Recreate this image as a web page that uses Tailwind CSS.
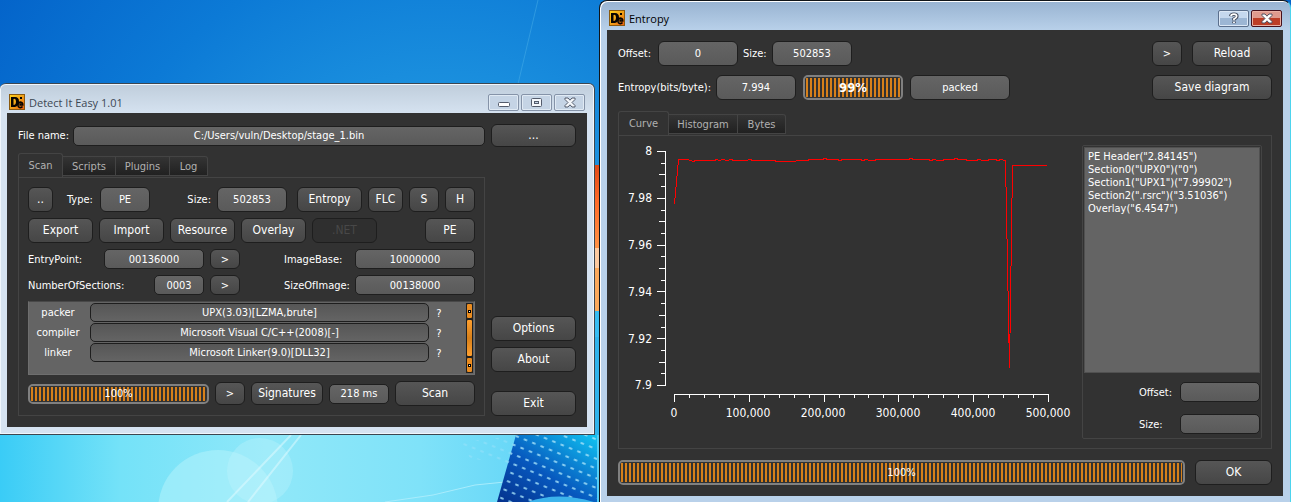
<!DOCTYPE html>
<html lang="en">
<head>
<meta charset="utf-8">
<title>Detect It Easy</title>
<script src="https://cdn.jsdelivr.net/npm/@tailwindcss/browser@4"></script>
</head>
<body class="relative h-screen overflow-hidden bg-[#1a8fe0] font-['DejaVu_Sans_Condensed','Noto_Sans',sans-serif] text-[11px] leading-[13px] text-white">

<!-- Wallpaper -->
<svg class="absolute inset-0 h-full w-full" viewBox="0 0 1291 502" preserveAspectRatio="xMinYMin slice" aria-hidden="true">
  <defs>
    <radialGradient id="sky" gradientUnits="userSpaceOnUse" cx="440" cy="300" r="580">
      <stop offset="0" stop-color="#22a4ea"/><stop offset=".36" stop-color="#1b90de"/><stop offset=".62" stop-color="#0c7ad6"/><stop offset=".92" stop-color="#0464ca"/>
    </radialGradient>
    <linearGradient id="sea" x1="0" x2="1" y1="0" y2="0">
      <stop offset="0" stop-color="#3accf6"/><stop offset=".2" stop-color="#74e2f8"/><stop offset=".45" stop-color="#90e8f9"/><stop offset=".7" stop-color="#7fe2f9"/><stop offset="1" stop-color="#54cef6"/>
    </linearGradient>
    <linearGradient id="flag" x1="0" x2="0" y1="0" y2="1">
      <stop offset="0" stop-color="#e04a18"/><stop offset=".35" stop-color="#ff6a28"/><stop offset="1" stop-color="#ffa050"/>
    </linearGradient>
    <linearGradient id="deep" x1="0" x2="1" y1="1" y2="0">
      <stop offset="0" stop-color="#04318c"/><stop offset=".45" stop-color="#0758be"/><stop offset="1" stop-color="#10c4f2"/>
    </linearGradient>
    <pattern id="dots" width="9" height="9" patternUnits="userSpaceOnUse" patternTransform="rotate(22)">
      <rect x="2" y="3" width="4" height="2" rx="1" fill="#a8e4fa" opacity=".8"/>
    </pattern>
    <clipPath id="bottom"><rect y="435" width="600" height="67"/></clipPath>
  </defs>
  <rect width="1291" height="502" fill="url(#sky)"/>
  <path d="M538 0 518 84" stroke="#4ab0e8" stroke-width="1" opacity=".5"/>
  <rect x="590" y="165" width="10" height="100" fill="url(#flag)"/>
  <rect x="590" y="248" width="10" height="20" fill="#fccaa0"/>
  <rect x="590" y="268" width="10" height="43" fill="#fba95c"/>
  <rect x="590" y="311" width="10" height="26" fill="#38bdf2"/>
  <rect x="590" y="337" width="10" height="110" fill="#30b4ec"/>
  <g clip-path="url(#bottom)">
    <rect y="435" width="600" height="67" fill="url(#sea)"/>
    <circle cx="218" cy="510" r="60" fill="#b8f4fb" opacity=".5"/>
    <circle cx="260" cy="471" r="33" fill="#c0f4fb" opacity=".35"/>
    <path d="M291 435 227 502M301 435 248 502" stroke="#e4fbff" stroke-width="2" opacity=".5"/>
    <path d="M385 502 433 495 475 485 505 482" stroke="#a8ecfc" fill="none"/>
    <path d="M516 435 597 435 597 502 497 502Z" fill="url(#deep)"/>
    <path d="M516 435 597 435 597 502 497 502Z" fill="url(#dots)"/>
    <path d="M460 442l54-6v30l-44 -8z" fill="url(#dots)" opacity=".5"/>
    <path d="M528 502Q560 490 600 504Z" fill="#3cb4ec"/>
  </g>
</svg>

<!-- Detect It Easy window -->
<main class="absolute left-0 top-[83px] w-[595px] rounded-t-md border border-l-0 border-[#3c4650] bg-[#d6e3f1] bg-linear-to-b from-[#bfcddb] from-0% to-[#d6e3f1] to-[30px] px-[7px] pb-[7px] shadow-[inset_0_0_0_1px_#f0f6fc]">
  <header class="flex h-[29px] items-center gap-1 pl-[2px] pt-[7px]">
    <svg class="h-4 w-4" viewBox="0 0 16 16" aria-hidden="true"><defs><linearGradient id="logo" x1="0" y1="0" x2="1" y2="1"><stop offset="0" stop-color="#ffd21c"/><stop offset=".5" stop-color="#f0a018"/><stop offset="1" stop-color="#f06010"/></linearGradient></defs><rect width="16" height="16" fill="#8a5a10"/><rect x="1" y="1" width="14" height="14" fill="url(#logo)"/><path d="M2 3h4q4 0 4 4.500T6 13H2zM4.500 5v6q2.500 0 2.500-3.500T4.500 5z" fill="#080400" fill-rule="evenodd"/><path d="M13.500 12.500q-1 1.500-3 1-1.800-.8-1.500-3Q9.500 8 11.500 8q2.500.3 2.300 3h-3.500M10.500 10h2" fill="none" stroke="#080400" stroke-width="1.500"/><path d="M11 3h2v2h-2z" fill="#080400"/></svg>
    <h1 class="font-['Open_Sans',sans-serif] text-[11px] text-[#3d4854]">Detect It Easy 1.01</h1>
    <div class="ml-auto mr-[2px] flex gap-[2px]">
      <button aria-label="Minimize" class="flex h-[17px] w-[31px] items-center justify-center rounded-xs border border-[#8593a8] bg-[#c5d4e5] shadow-[inset_0_0_0_1px_#e0eaf4]"><svg width="12" height="11" viewBox="0 0 12 11"><rect x=".5" y="5.500" width="11" height="4" rx="1" fill="#fff" stroke="#535b6b"/></svg></button>
      <button aria-label="Maximize" class="flex h-[17px] w-[31px] items-center justify-center rounded-xs border border-[#8593a8] bg-[#c5d4e5] shadow-[inset_0_0_0_1px_#e0eaf4]"><svg width="11" height="11" viewBox="0 0 11 11"><rect x=".5" y="1.500" width="10" height="8" rx="1" fill="#f4f7fb" stroke="#535b6b"/><rect x="3.500" y="4.500" width="4" height="2" fill="#c5d4e5" stroke="#535b6b"/></svg></button>
      <button aria-label="Close" class="flex h-[17px] w-[31px] items-center justify-center rounded-xs border border-[#8593a8] bg-[#c5d4e5] shadow-[inset_0_0_0_1px_#e0eaf4]"><svg width="12" height="11" viewBox="0 0 12 11"><path d="M1 1h3l2 2.200L8 1h3v1.500L8 5.500l3 3V10H8L6 7.800 4 10H1V8.500l3-3-3-3z" fill="#f4f7fb" stroke="#535b6b"/></svg></button>
    </div>
  </header>

  <div class="bg-[#323232] p-[11px]">
    <div class="flex h-[23px] items-center gap-[6px]">
      <label for="file" class="w-[49px] whitespace-nowrap">File name:</label>
      <input id="file" value="C:/Users/vuln/Desktop/stage_1.bin" class="h-5 min-w-0 flex-1 rounded-[5px] border border-[#1e1e1e] bg-linear-to-b from-[#656565] to-[#5a5a5a] text-center">
      <button class="h-[23px] w-[85px] rounded-md border border-[#1e1e1e] bg-linear-to-b from-[#565656] to-[#464646] text-[12px]">...</button>
    </div>

    <div class="mt-[6px] flex gap-[6px]">
      <section class="min-w-0 flex-1">
        <nav class="flex h-6 text-[11px] text-[#b1b1b1]">
          <button class="h-6 w-[45px] rounded-t-[3px] border border-b-0 border-[#444]">Scan</button>
          <button class="mt-[3px] h-5 w-[53px] border border-l-0 border-[#444] bg-linear-to-b from-[#343434] to-[#212121]">Scripts</button>
          <button class="mt-[3px] h-5 w-[54px] border border-l-0 border-[#444] bg-linear-to-b from-[#343434] to-[#212121]">Plugins</button>
          <button class="mt-[3px] h-5 w-[38px] rounded-tr-[3px] border border-l-0 border-[#444] bg-linear-to-b from-[#343434] to-[#212121]">Log</button>
        </nav>
        <div class="flex flex-col gap-[6px] border border-[#444] p-[9px]">
          <div class="flex h-[25px] items-center gap-[6px]">
            <button class="h-[25px] w-[25px] rounded-md border border-[#1e1e1e] bg-linear-to-b from-[#565656] to-[#464646] text-[12px]">..</button>
            <label for="type" class="ml-2 w-[27px] whitespace-nowrap">Type:</label>
            <input id="type" value="PE" class="h-[25px] w-[50px] rounded-md border border-[#1e1e1e] bg-linear-to-b from-[#656565] to-[#5a5a5a] text-center">
            <label for="size" class="min-w-0 flex-1 text-right">Size:</label>
            <input id="size" value="502853" class="h-[25px] w-[70px] rounded-md border border-[#1e1e1e] bg-linear-to-b from-[#656565] to-[#5a5a5a] text-center">
            <button class="ml-1 h-[25px] w-[65px] rounded-md border border-[#1e1e1e] bg-linear-to-b from-[#565656] to-[#464646] text-[12px]">Entropy</button>
            <button class="h-[25px] w-[35px] rounded-md border border-[#1e1e1e] bg-linear-to-b from-[#565656] to-[#464646] text-[12px]">FLC</button>
            <button class="h-[25px] w-[30px] rounded-md border border-[#1e1e1e] bg-linear-to-b from-[#565656] to-[#464646] text-[12px]">S</button>
            <button class="h-[25px] w-[30px] rounded-md border border-[#1e1e1e] bg-linear-to-b from-[#565656] to-[#464646] text-[12px]">H</button>
          </div>
          <div class="flex h-[25px] gap-[6px] text-[12px]">
            <button class="w-[65px] rounded-md border border-[#1e1e1e] bg-linear-to-b from-[#565656] to-[#464646]">Export</button>
            <button class="w-[65px] rounded-md border border-[#1e1e1e] bg-linear-to-b from-[#565656] to-[#464646]">Import</button>
            <button class="w-[65px] rounded-md border border-[#1e1e1e] bg-linear-to-b from-[#565656] to-[#464646]">Resource</button>
            <button class="w-[65px] rounded-md border border-[#1e1e1e] bg-linear-to-b from-[#565656] to-[#464646]">Overlay</button>
            <button disabled class="w-[65px] rounded-md border border-[#1e1e1e] bg-[#2f2f2f] text-[#484848]">.NET</button>
            <button class="ml-auto w-[50px] rounded-md border border-[#1e1e1e] bg-linear-to-b from-[#565656] to-[#464646]">PE</button>
          </div>
          <div class="flex h-5 items-center gap-[6px]">
            <label for="entry" class="w-[70px] whitespace-nowrap">EntryPoint:</label>
            <input id="entry" value="00136000" class="h-5 w-[100px] rounded-[5px] border border-[#1e1e1e] bg-linear-to-b from-[#656565] to-[#5a5a5a] text-center">
            <button class="h-5 w-[30px] rounded-md border border-[#1e1e1e] bg-linear-to-b from-[#565656] to-[#464646]">&gt;</button>
            <label for="base" class="ml-auto w-[65px] whitespace-nowrap">ImageBase:</label>
            <input id="base" value="10000000" class="h-5 w-[120px] rounded-[5px] border border-[#1e1e1e] bg-linear-to-b from-[#656565] to-[#5a5a5a] text-center">
          </div>
          <div class="flex h-5 items-center gap-[6px]">
            <label for="sections" class="w-[120px] whitespace-nowrap">NumberOfSections:</label>
            <input id="sections" value="0003" class="h-5 w-[50px] rounded-[5px] border border-[#1e1e1e] bg-linear-to-b from-[#656565] to-[#5a5a5a] text-center">
            <button class="h-5 w-[30px] rounded-md border border-[#1e1e1e] bg-linear-to-b from-[#565656] to-[#464646]">&gt;</button>
            <label for="imgsize" class="ml-auto w-[65px] whitespace-nowrap">SizeOfImage:</label>
            <input id="imgsize" value="00138000" class="h-5 w-[120px] rounded-[5px] border border-[#1e1e1e] bg-linear-to-b from-[#656565] to-[#5a5a5a] text-center">
          </div>
          <div class="flex h-[74px] border border-[#6e6e6e] border-t-[#484848] bg-[#646464] px-px py-px">
            <div class="min-w-0 flex-1">
              <div class="flex h-5 items-start"><label for="packer" class="mr-1 w-14 pt-[3px] text-center">packer</label><input id="packer" value="UPX(3.03)[LZMA,brute]" class="h-[19px] min-w-0 flex-1 rounded-[5px] border border-[#1e1e1e] bg-linear-to-b from-[#565656] to-[#646464] text-center"><button class="h-5 w-5">?</button></div>
              <div class="flex h-5 items-start"><label for="compiler" class="mr-1 w-14 pt-[3px] text-center">compiler</label><input id="compiler" value="Microsoft Visual C/C++(2008)[-]" class="h-[19px] min-w-0 flex-1 rounded-[5px] border border-[#1e1e1e] bg-linear-to-b from-[#565656] to-[#646464] text-center"><button class="h-5 w-5">?</button></div>
              <div class="flex h-5 items-start"><label for="linker" class="mr-1 w-14 pt-[3px] text-center">linker</label><input id="linker" value="Microsoft Linker(9.0)[DLL32]" class="h-[19px] min-w-0 flex-1 rounded-[5px] border border-[#1e1e1e] bg-linear-to-b from-[#565656] to-[#646464] text-center"><button class="h-5 w-5">?</button></div>
            </div>
            <div class="ml-[17px] flex w-[7px] flex-col bg-[#222]">
              <button aria-label="Scroll up" class="flex h-4 items-center justify-center rounded-xs border border-[#1e1e1e] bg-[#ea8c20]"><span class="h-[3px] w-[3px] border border-black bg-white"></span></button>
              <div class="flex-1 rounded-xs border border-[#1e1e1e] bg-linear-to-b from-[#ffa02f] via-[#d7801a] to-[#ffa02f]"></div>
              <button aria-label="Scroll down" class="flex h-4 items-center justify-center rounded-xs border border-[#1e1e1e] bg-[#ea8c20]"><span class="h-[3px] w-[3px] border border-black bg-white"></span></button>
            </div>
          </div>
          <div class="flex h-[25px] items-center gap-[6px]">
            <div role="progressbar" aria-valuenow="100" class="h-5 min-w-0 flex-1 rounded-[5px] border-2 border-[#808080] p-px"><div class="flex h-full items-center justify-center bg-[repeating-linear-gradient(90deg,#d7801a_0_2px,#323232_2px_4px)]">100%</div></div>
            <button class="h-[23px] w-[30px] rounded-md border border-[#1e1e1e] bg-linear-to-b from-[#565656] to-[#464646]">&gt;</button>
            <button class="h-[23px] w-[72px] rounded-md border border-[#1e1e1e] bg-linear-to-b from-[#565656] to-[#464646] text-[12px]">Signatures</button>
            <input aria-label="Elapsed" value="218 ms" class="h-5 w-[60px] rounded-[5px] border border-[#1e1e1e] bg-linear-to-b from-[#656565] to-[#5a5a5a] text-center">
            <button class="h-[25px] w-[80px] rounded-md border border-[#1e1e1e] bg-linear-to-b from-[#565656] to-[#464646] text-[12px]">Scan</button>
          </div>
        </div>
      </section>
      <aside class="flex w-[85px] flex-col justify-end gap-[6px] text-[12px]">
        <button class="h-[25px] rounded-md border border-[#1e1e1e] bg-linear-to-b from-[#565656] to-[#464646]">Options</button>
        <button class="h-[25px] rounded-md border border-[#1e1e1e] bg-linear-to-b from-[#565656] to-[#464646]">About</button>
        <button class="mt-[13px] h-[25px] rounded-md border border-[#1e1e1e] bg-linear-to-b from-[#565656] to-[#464646]">Exit</button>
      </aside>
    </div>
  </div>
</main>

<!-- Entropy window -->
<div role="dialog" aria-labelledby="entropy-title" class="absolute left-[599px] right-0 top-0 rounded-t-lg border border-[#101418] border-r-[#4cd4ee] bg-[#b9d1ea] bg-linear-to-b from-[#98b3d1] from-0% to-[#b9d1ea] to-[30px] pb-2 pl-[7px] pr-[7px] shadow-[inset_1px_1px_0_#fff]">
  <header class="flex h-[29px] items-center gap-1 pl-[2px] pt-[5px]">
    <svg class="h-4 w-4" viewBox="0 0 16 16" aria-hidden="true"><rect width="16" height="16" fill="#8a5a10"/><rect x="1" y="1" width="14" height="14" fill="url(#logo)"/><path d="M2 3h4q4 0 4 4.500T6 13H2zM4.500 5v6q2.500 0 2.500-3.500T4.500 5z" fill="#080400" fill-rule="evenodd"/><path d="M13.500 12.500q-1 1.500-3 1-1.800-.8-1.500-3Q9.500 8 11.500 8q2.500.3 2.300 3h-3.500M10.500 10h2" fill="none" stroke="#080400" stroke-width="1.500"/><path d="M11 3h2v2h-2z" fill="#080400"/></svg>
    <h2 id="entropy-title" class="font-['Open_Sans',sans-serif] text-[11px] text-black">Entropy</h2>
    <div class="ml-auto mr-[1px] flex gap-[2px]">
      <button aria-label="Help" class="flex h-[17px] w-[31px] items-center justify-center rounded-xs border border-[#5b6f8c] bg-linear-to-b from-[#c5d8ee] from-50% to-[#9cb6d4] to-50% shadow-[inset_0_0_0_1px_#dce8f6]"><svg width="10" height="13" viewBox="0 0 10 13"><path d="M1.800 4.200Q2 2.200 5 2.200t2.800 2Q7.800 5.500 5 7v1.400M5 9.600v1.600" fill="none" stroke="#454c5c" stroke-width="3.600"/><path d="M2 4.200Q2.200 2.200 5 2.200t2.600 2Q7.600 5.500 5 7v1.200M5 9.800v1.300" fill="none" stroke="#fff" stroke-width="1.800"/></svg></button>
      <button aria-label="Close" class="flex h-[17px] w-[31px] items-center justify-center rounded-xs border border-[#46101c] bg-linear-to-b from-[#e09a8e] from-50% to-[#bd3d26] to-50% shadow-[inset_0_0_0_1px_#eab0a4]"><svg width="12" height="11" viewBox="0 0 12 11"><path d="M1 1h3l2 2.200L8 1h3v1.500L8 5.500l3 3V10H8L6 7.800 4 10H1V8.500l3-3-3-3z" fill="#fff" stroke="#535060"/></svg></button>
    </div>
  </header>

  <div class="bg-[#323232] p-[11px]">
    <div class="flex h-[25px] items-center gap-[5px]">
      <label for="off" class="w-[35px] whitespace-nowrap">Offset:</label>
      <input id="off" value="0" class="h-[25px] w-[80px] rounded-md border border-[#1e1e1e] bg-linear-to-b from-[#656565] to-[#5a5a5a] text-center">
      <label for="esize" class="w-[24px] whitespace-nowrap">Size:</label>
      <input id="esize" value="502853" class="h-[25px] w-[80px] rounded-md border border-[#1e1e1e] bg-linear-to-b from-[#656565] to-[#5a5a5a] text-center">
      <button class="ml-auto mr-[5px] h-[25px] w-[30px] rounded-md border border-[#1e1e1e] bg-linear-to-b from-[#565656] to-[#464646]">&gt;</button>
      <button class="h-[25px] w-[80px] rounded-md border border-[#1e1e1e] bg-linear-to-b from-[#565656] to-[#464646] text-[12px]">Reload</button>
    </div>
    <div class="mt-[9px] flex h-[25px] items-center gap-[7px]">
      <label for="ent" class="w-[91px] whitespace-nowrap">Entropy(bits/byte):</label>
      <input id="ent" value="7.994" class="h-[25px] w-[80px] rounded-md border border-[#1e1e1e] bg-linear-to-b from-[#656565] to-[#5a5a5a] text-center">
      <div role="progressbar" aria-valuenow="99" class="h-[25px] w-[100px] rounded-[5px] border-2 border-[#808080] p-px"><div class="flex h-full items-center justify-center bg-[repeating-linear-gradient(90deg,#d7801a_0_2px,#323232_2px_4px)] text-[13px] font-bold">99%</div></div>
      <input aria-label="Status" value="packed" class="h-[25px] w-[100px] rounded-md border border-[#1e1e1e] bg-linear-to-b from-[#656565] to-[#5a5a5a] text-center">
      <button class="ml-auto h-[25px] w-[120px] rounded-md border border-[#1e1e1e] bg-linear-to-b from-[#565656] to-[#464646] text-[12px]">Save diagram</button>
    </div>

    <nav class="mt-[11px] flex h-6 text-[11px] text-[#b1b1b1]">
      <button class="h-6 w-[51px] rounded-t-[3px] border border-b-0 border-[#444]">Curve</button>
      <button class="mt-[3px] h-5 w-[69px] border border-l-0 border-[#444] bg-linear-to-b from-[#343434] to-[#212121]">Histogram</button>
      <button class="mt-[3px] h-5 w-[48px] rounded-tr-[3px] border border-l-0 border-[#444] bg-linear-to-b from-[#343434] to-[#212121]">Bytes</button>
    </nav>
    <div class="flex border border-[#444] pr-[9px]">
      <svg class="h-[312px] min-w-0 flex-1" viewBox="619 136 463 312" preserveAspectRatio="xMinYMin meet" role="img" aria-label="Entropy curve">
        <path fill="none" stroke="#fff" d="M665.500 151V386M657 151.500h9M657 198.500h9M657 245.500h9M657 291.500h9M657 338.500h9M657 385.500h9M659 174.500h6M659 221.500h6M659 268.500h6M659 315.500h6M659 362.500h6M661 163.500h4M661 186.500h4M661 210.500h4M661 233.500h4M661 256.500h4M661 280.500h4M661 303.500h4M661 327.500h4M661 350.500h4M661 373.500h4"/>
        <path fill="none" stroke="#fff" d="M674 394.500H1049M674.500 394v8M749.500 394v8M824.500 394v8M898.500 394v8M973.500 394v8M1048.500 394v8M689.500 394v4M704.500 394v4M719.500 394v4M734.500 394v4M764.500 394v4M779.500 394v4M794.500 394v4M809.500 394v4M839.500 394v4M854.500 394v4M868.500 394v4M883.500 394v4M913.500 394v4M928.500 394v4M943.500 394v4M958.500 394v4M988.500 394v4M1003.500 394v4M1018.500 394v4M1033.500 394v4"/>
        <path fill="none" stroke="#f00" shape-rendering="crispEdges" d="M674.500 204 678.500 159.500H688L693 161.500 696 160.500H714L717 159.500 719 160.500 723 159.500 727 160.500 731 159.500 734 160.500H746L750 159.500 753 160.500H774L777 161.500H794L798 160.500H807L810 159.500H822L825 158.500 828 159.500H837L840 160.500 843 159.500H860L863 160.500 866 159.500 870 160.500H874L877 159.500H908L911 158.500 914 159.500H928L931 160.500 934 159.500 938 160.500H942L945 159.500H953L956 158.500 959 159.500H965L968 160.500H976L979 159.500 983 160.500H987L990 159.500H995L998 160.500 1001 159.500 1005.500 160.500 1009.500 368 1012.500 165.500H1047"/>
        <g fill="#fff" font-size="12">
          <g text-anchor="end"><text x="652" y="155">8</text><text x="652" y="202">7.98</text><text x="652" y="249">7.96</text><text x="652" y="296">7.94</text><text x="652" y="343">7.92</text><text x="652" y="389">7.9</text></g>
          <g text-anchor="middle"><text x="674" y="417">0</text><text x="748" y="417">100,000</text><text x="823" y="417">200,000</text><text x="898" y="417">300,000</text><text x="973" y="417">400,000</text><text x="1048" y="417">500,000</text></g>
        </g>
      </svg>
      <div class="mb-[9px] mt-[9px] flex w-[180px] flex-col rounded-xs border border-[#444] p-px">
        <ul class="h-[226px] whitespace-nowrap border border-[#505050] bg-[#646464] px-[3px] py-[2px]">
          <li>PE Header("2.84145")</li>
          <li>Section0("UPX0")("0")</li>
          <li>Section1("UPX1")("7.99902")</li>
          <li>Section2(".rsrc")("3.51036")</li>
          <li>Overlay("6.4547")</li>
        </ul>
        <div class="mt-[9px] flex items-center justify-end"><label for="soff" class="w-[41px]">Offset:</label><input id="soff" class="h-5 w-[80px] rounded-[5px] border border-[#1e1e1e] bg-linear-to-b from-[#656565] to-[#5a5a5a] text-center"></div>
        <div class="mt-3 flex items-center justify-end"><label for="ssize" class="w-[41px]">Size:</label><input id="ssize" class="h-5 w-[80px] rounded-[5px] border border-[#1e1e1e] bg-linear-to-b from-[#656565] to-[#5a5a5a] text-center"></div>
      </div>
    </div>

    <div class="mt-[11px] flex h-[25px] gap-[10px]">
      <div role="progressbar" aria-valuenow="100" class="min-w-0 flex-1 rounded-[5px] border-2 border-[#808080] p-px"><div class="flex h-full items-center justify-center bg-[repeating-linear-gradient(90deg,#d7801a_0_2px,#323232_2px_4px)]">100%</div></div>
      <button class="w-[77px] rounded-md border border-[#1e1e1e] bg-linear-to-b from-[#565656] to-[#464646] text-[12px]">OK</button>
    </div>
  </div>
</div>
</body>
</html>
